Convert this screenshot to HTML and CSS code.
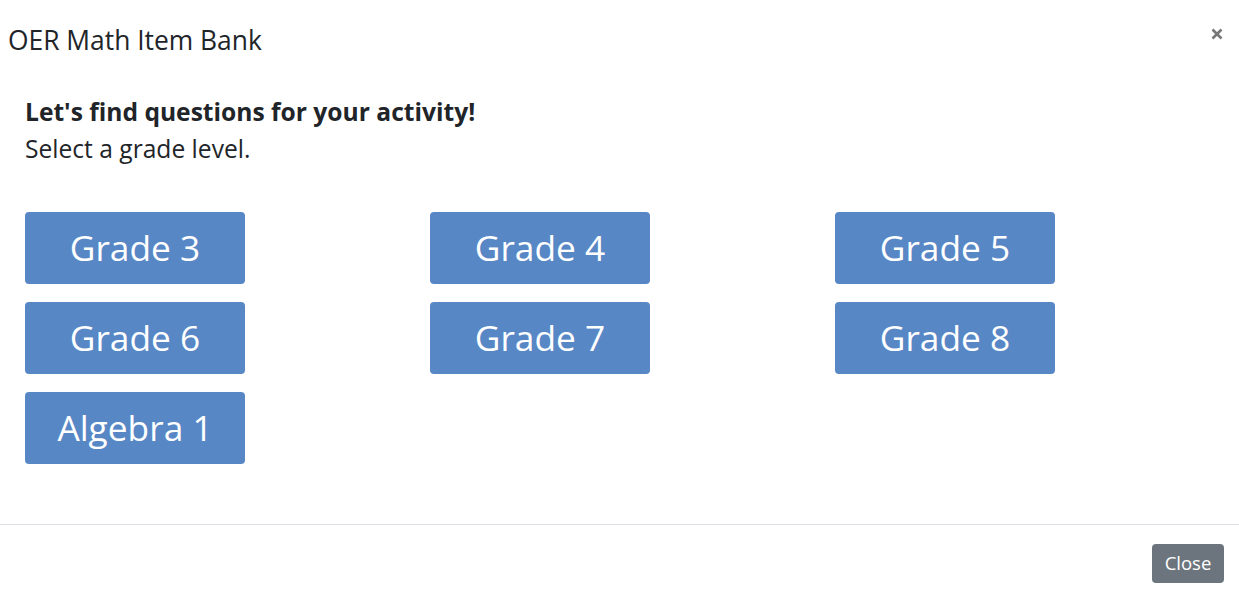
FILE: index.html
```html
<!DOCTYPE html>
<html lang="en">
<head>
<meta charset="utf-8">
<title>OER Math Item Bank</title>
<link rel="stylesheet" href="styles.css">
</head>
<body>
<div class="modal">
  <header class="modal-header">
    <h1 class="modal-title">OER Math Item Bank</h1>
    <button class="btn-x" type="button" aria-label="Close">
      <svg width="12" height="12" viewBox="0 0 12 12"><path d="M1.5 1.5 L10.5 10.5 M10.5 1.5 L1.5 10.5" stroke="#777" stroke-width="2.6" stroke-linecap="butt"/></svg>
    </button>
  </header>
  <main class="modal-body">
    <p class="lead-bold">Let's find questions for your activity!</p>
    <p class="lead">Select a grade level.</p>
    <div class="grades">
      <button class="grade">Grade 3</button>
      <button class="grade">Grade 4</button>
      <button class="grade">Grade 5</button>
      <button class="grade">Grade 6</button>
      <button class="grade">Grade 7</button>
      <button class="grade">Grade 8</button>
      <button class="grade">Algebra 1</button>
    </div>
  </main>
  <footer class="modal-footer">
    <button class="btn-close" type="button">Close</button>
  </footer>
</div>
</body>
</html>
```
FILE: styles.css
```css
* { box-sizing: border-box; }
html, body { margin: 0; padding: 0; background: #fff; }
body {
  font-family: "Open Sans", "Liberation Sans", sans-serif;
  color: #212529;
  width: 1239px;
  height: 596px;
  overflow: hidden;
}
.modal { display: flex; flex-direction: column; height: 596px; }
.modal-header {
  display: flex;
  justify-content: space-between;
  align-items: flex-start;
  padding: 22px 8px 0 8px;
  height: 80px;
}
.modal-title {
  margin: 0;
  font-size: 26.4px;
  font-weight: 400;
  line-height: 36px;
}
.btn-x {
  border: 0;
  background: none;
  padding: 0;
  margin: 0 2px 0 0;
  width: 24px;
  height: 24px;
  display: flex;
  align-items: center;
  justify-content: center;
}
.modal-body {
  padding: 13px 0 0 25px;
  flex: 1;
}
.lead-bold, .lead {
  margin: 0;
  font-size: 24.6px;
  line-height: 38px;
}
.lead-bold { font-weight: 700; }
.lead { margin-top: -1px; }
.grades {
  margin-top: 44px;
  display: grid;
  grid-template-columns: repeat(3, 405px);
  row-gap: 18px;
}
.grade {
  width: 220px;
  height: 72px;
  border: 0;
  border-radius: 4px;
  background: #5887c6;
  color: #fff;
  font-family: "Open Sans", "Liberation Sans", sans-serif;
  font-size: 35.3px;
  padding: 0 0 3px 0;
}
.modal-footer {
  border-top: 1px solid #dee2e6;
  height: 72px;
  display: flex;
  justify-content: flex-end;
  align-items: center;
  padding: 0 15px;
}
.btn-close {
  background: #6c757d;
  color: #fff;
  border: 0;
  border-radius: 4px;
  font-family: "Open Sans", "Liberation Sans", sans-serif;
  font-size: 18.5px;
  width: 72px;
  height: 39px;
  padding: 0 0 3px 0;
  margin-top: 6px;
}
```
